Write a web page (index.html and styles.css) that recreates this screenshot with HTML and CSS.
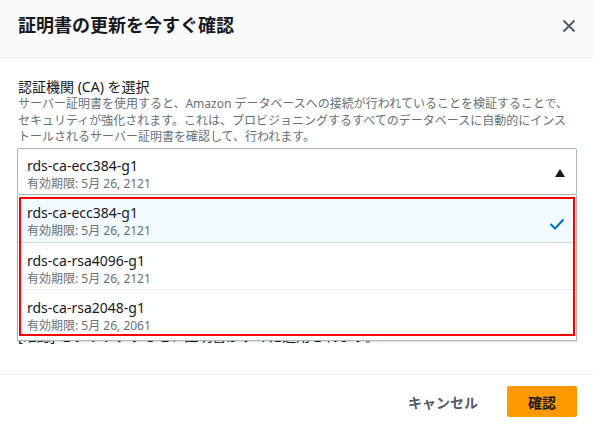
FILE: index.html
```html
<!DOCTYPE html>
<html lang="ja">
<head>
<meta charset="utf-8">
<link rel="stylesheet" href="styles.css">
</head>
<body>
<div class="modal">
  <header class="header">
    <h1 class="title">証明書の更新を今すぐ確認</h1>
    <button class="close" aria-label="閉じる">
      <svg width="14" height="14" viewBox="0 0 14 14"><path d="M1.5 1.5 L12.5 12.5 M12.5 1.5 L1.5 12.5" stroke="#545b64" stroke-width="2" fill="none"/></svg>
    </button>
  </header>
  <main class="content">
    <div class="label">認証機関 (CA) を選択</div>
    <p class="desc">サーバー証明書を使用すると、Amazon データベースへの接続が行われていることを検証することで、<br>セキュリティが強化されます。これは、プロビジョニングするすべてのデータベースに自動的にインス<br>トールされるサーバー証明書を確認して、行われます。</p>
    <div class="select-wrap">
      <div class="select">
        <div class="opt-text">
          <div class="opt-name">rds-ca-ecc384-g1</div>
          <div class="opt-sub">有効期限: 5月 26, 2121</div>
        </div>
        <svg class="caret" width="10" height="8" viewBox="0 0 10 8"><path d="M5 0 L10 8 L0 8 Z" fill="#16191f"/></svg>
      </div>
      <ul class="dropdown">
        <li class="item selected">
          <div class="opt-text">
            <div class="opt-name">rds-ca-ecc384-g1</div>
            <div class="opt-sub">有効期限: 5月 26, 2121</div>
          </div>
          <svg class="check" width="16" height="12" viewBox="0 0 16 12"><path d="M1.5 6 L6 10.5 L14.5 1.5" stroke="#0073bb" stroke-width="2" fill="none"/></svg>
        </li>
        <li class="item">
          <div class="opt-text">
            <div class="opt-name">rds-ca-rsa4096-g1</div>
            <div class="opt-sub">有効期限: 5月 26, 2121</div>
          </div>
        </li>
        <li class="item last">
          <div class="opt-text">
            <div class="opt-name">rds-ca-rsa2048-g1</div>
            <div class="opt-sub">有効期限: 5月 26, 2061</div>
          </div>
        </li>
        <li class="highlight" aria-hidden="true"></li>
      </ul>
    </div>
    <p class="note">[確認] をクリックすると、証明書がすぐに適用されます。</p>
  </main>
  <footer class="footer">
    <button class="btn-link">キャンセル</button>
    <button class="btn-primary">確認</button>
  </footer>
</div>
</body>
</html>
```

FILE: styles.css
```css
* { box-sizing: border-box; }
html, body {
  margin: 0;
  padding: 0;
  background: #ffffff;
}
body {
  font-family: "Noto Sans", "Noto Sans CJK JP", sans-serif;
  color: #16191f;
  width: 593px;
  height: 430px;
  overflow: hidden;
}
.modal {
  display: flex;
  flex-direction: column;
  height: 430px;
}
.header {
  height: 58px;
  background: #fafafa;
  border-bottom: 1px solid #eaeded;
  display: flex;
  align-items: center;
  justify-content: space-between;
  padding: 0 17px 7px 18px;
}
.title {
  margin: 0;
  font-size: 18px;
  font-weight: 700;
  line-height: 24px;
  color: #16191f;
}
.close {
  border: 0;
  background: none;
  padding: 0;
  width: 14px;
  height: 14px;
  display: flex;
  margin-top: 2px;
}
.content {
  padding: 20px 16px 0 17px;
  flex: 1;
}
.label {
  font-size: 14px;
  line-height: 18px;
  color: #16191f;
  padding-left: 1px;
}
.desc {
  margin: 0;
  font-size: 12px;
  line-height: 16.5px;
  color: #687078;
  padding-left: 1px;
  white-space: nowrap;
}
.select-wrap {
  position: relative;
  margin-top: 2px;
  width: 560px;
}
.select {
  height: 47px;
  border: 1px solid #aab7b8;
  border-radius: 2px;
  display: flex;
  align-items: center;
  justify-content: space-between;
  padding: 0 11px 0 9px;
}
.opt-text {
  display: flex;
  flex-direction: column;
}
.opt-name {
  font-size: 14px;
  line-height: 20px;
  color: #16191f;
}
.opt-sub {
  font-size: 12px;
  line-height: 16px;
  color: #687078;
}
.select .opt-text { padding-top: 5px; }
.caret { margin-top: 3px; }
.dropdown {
  position: absolute;
  left: 0;
  top: 47px;
  width: 560px;
  margin: 0;
  padding: 0;
  list-style: none;
  background: #ffffff;
  border: 1px solid #aab7b8;
  border-top: 0;
  box-shadow: 0 1px 2px rgba(0, 22, 28, 0.15);
}
.item {
  height: 47px;
  display: flex;
  align-items: flex-start;
  justify-content: space-between;
  padding: 8px 10px 0 9px;
  border-bottom: 1px solid #eaeded;
}
.item.selected {
  background: #f1faff;
  height: 48px;
  padding-top: 8.5px;
  border-bottom-color: #d5dbdb;
}
.item.last {
  border-bottom: 0;
  height: 50px;
}
.check {
  align-self: center;
  margin: 3px 1px 0 0;
}
.highlight {
  position: absolute;
  left: 1px;
  right: 1px;
  top: 2px;
  bottom: 4px;
  border: 2.5px solid #ff0000;
  pointer-events: none;
}
.note {
  margin: 131px 0 0 1px;
  font-size: 14px;
  line-height: 20px;
  color: #16191f;
}
.footer {
  height: 56px;
  border-top: 1px solid #eaeded;
  display: flex;
  align-items: center;
  justify-content: flex-end;
  gap: 29px;
  padding: 0 16px 2px 0;
}
.btn-link {
  border: 0;
  background: none;
  padding: 0;
  font-family: inherit;
  font-size: 14px;
  font-weight: 700;
  color: #545b64;
}
.btn-primary {
  border: 0;
  border-radius: 2px;
  background: #ff9900;
  height: 31px;
  width: 70px;
  font-family: inherit;
  font-size: 14px;
  font-weight: 700;
  color: #16191f;
}
```
